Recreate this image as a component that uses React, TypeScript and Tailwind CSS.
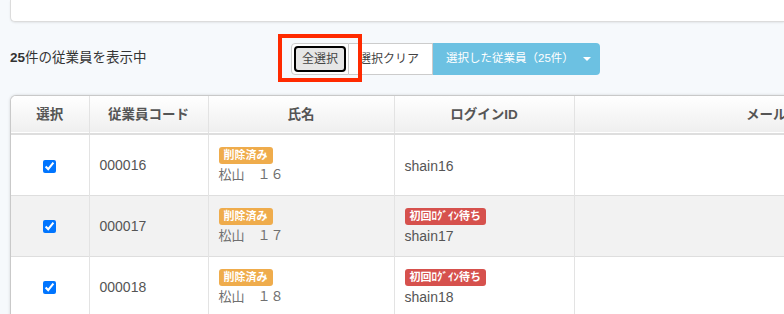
import React from "react";

type Row = {
  code: string;
  name: string;
  login: string;
  firstLogin: boolean;
};

const rows: Row[] = [
  { code: "000016", name: "松山　１６", login: "shain16", firstLogin: false },
  { code: "000017", name: "松山　１７", login: "shain17", firstLogin: true },
  { code: "000018", name: "松山　１８", login: "shain18", firstLogin: true },
];

const font = { fontFamily: '"Liberation Sans", "Noto Sans CJK JP", sans-serif' };

function Badge({ color, children }: { color: string; children: React.ReactNode }) {
  return (
    <span
      className={`inline-block rounded-[3px] px-[5px] h-[17px] leading-[17px] text-[11px] font-bold text-white ${color}`}
    >
      {children}
    </span>
  );
}

export default function App() {
  return (
    <div className="w-[784px] h-[314px] overflow-hidden bg-[#f6f9fc] text-[#555]" style={font}>
      {/* top panel */}
      <div className="ml-[10px] h-[22px] bg-white border-l border-b border-[#dcdcdc] rounded-bl-[5px] shadow-[0_1px_2px_rgba(0,0,0,0.08)]" />

      {/* toolbar */}
      <div className="relative flex items-center h-[73px] pl-[10px] pb-[2px] pt-[2px]">
        <div className="w-[281px] text-[13.5px] text-[#333]">
          <b>25</b>件の従業員を表示中
        </div>
        <div className="flex h-[32px] text-[12px] whitespace-nowrap">
          <button className="w-[58px] h-full p-[2px] border border-[#ccc] rounded-l-[4px] bg-white">
            <span className="flex items-center justify-center w-full h-full bg-[#e6e6e6] border-2 border-black rounded-[4px] text-[#444]">
              全選択
            </span>
          </button>
          <button className="w-[84px] h-full border border-l-0 border-[#ccc] bg-white text-[#444] text-left pl-[10px]">
            選択クリア
          </button>
          <button className="flex items-center w-[167px] h-full pl-[13px] rounded-r-[4px] bg-[#6cc1e2] text-white text-[11.5px]">
            選択した従業員（25件）
            <span className="ml-[9px] w-0 h-0 border-l-[4px] border-r-[4px] border-t-[4px] border-l-transparent border-r-transparent border-t-white" />
          </button>
        </div>
        {/* highlight annotation */}
        <div className="absolute left-[278px] top-[12px] w-[84px] h-[48px] border-[4px] border-[#ff2a00]" />
      </div>

      {/* table */}
      <div className="ml-[10px] w-[1000px] border-l border-t border-[#c9c9c9] rounded-tl-[6px] bg-white shadow-[0_0_3px_rgba(0,0,0,0.15)] overflow-hidden">
        <table className="w-full border-collapse text-[14px] table-fixed">
          <thead>
            <tr className="h-[38px] bg-gradient-to-b from-white to-[#efefef] border-b-2 border-[#dedede] text-[13.5px] font-bold text-[#555]">
              <th className="w-[78px] border-r border-[#e3e3e3] pt-[2px]">選択</th>
              <th className="w-[119px] border-r border-[#e3e3e3] pt-[2px]">従業員コード</th>
              <th className="w-[186px] border-r border-[#e3e3e3] pt-[2px]">氏名</th>
              <th className="w-[180px] border-r border-[#e3e3e3] pt-[2px]">ログインID</th>
              <th className="pt-[2px] pl-[2px]">メールアドレス</th>
            </tr>
          </thead>
          <tbody>
            {rows.map((r, i) => (
              <tr
                key={r.code}
                className={`h-[61px] border-b border-[#dedede] ${i % 2 === 1 ? "bg-[#f2f2f2]" : "bg-white"}`}
              >
                <td className="border-r border-[#e3e3e3] text-center align-middle">
                  <input type="checkbox" defaultChecked className="w-[13px] h-[13px] align-middle mt-[1px]" />
                </td>
                <td className="border-r border-[#e3e3e3] pl-[10px] pt-[2px] text-[#555]">{r.code}</td>
                <td className="border-r border-[#e3e3e3] pl-[10px] leading-[18px]">
                  <Badge color="bg-[#efac4c]">削除済み</Badge>
                  <div className="mt-[2px] text-[13px] text-[#707070]">{r.name}</div>
                </td>
                <td className="border-r border-[#e3e3e3] pl-[10px] leading-[18px] text-[#555]">
                  {r.firstLogin && (
                    <>
                      <Badge color="bg-[#d6514d]">初回ﾛｸﾞｲﾝ待ち</Badge>
                      <div className="mt-[2px]">{r.login}</div>
                    </>
                  )}
                  {!r.firstLogin && <div className="pt-[2px]">{r.login}</div>}
                </td>
                <td />
              </tr>
            ))}
          </tbody>
        </table>
      </div>
    </div>
  );
}
